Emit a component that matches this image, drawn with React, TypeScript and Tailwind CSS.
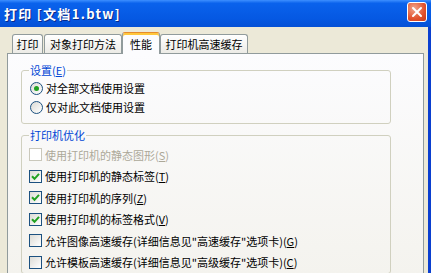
import React from "react";

const cjk = { fontFamily: '"Noto Sans CJK SC", "Noto Sans", sans-serif' };

function Mn({ k }: { k: string }) {
  return (
    <span>
      (<span className="underline underline-offset-[1px]">{k}</span>)
    </span>
  );
}

function Radio({ checked, children }: { checked?: boolean; children: React.ReactNode }) {
  return (
    <div className="flex h-[19px] items-center">
      <span className="flex h-[13px] w-[13px] items-center justify-center rounded-full border border-[#1c5180] bg-[linear-gradient(135deg,#dcdbd5,#ffffff)]">
        {checked && <span className="h-[5px] w-[5px] rounded-full bg-[#21a121]" />}
      </span>
      <span className="ml-[3px] text-[11px] text-black">{children}</span>
    </div>
  );
}

function Check({
  checked,
  disabled,
  children,
}: {
  checked?: boolean;
  disabled?: boolean;
  children: React.ReactNode;
}) {
  return (
    <div className="flex h-[21.5px] shrink-0 items-center">
      <span
        className={
          disabled
            ? "flex h-[13px] w-[13px] items-center justify-center border border-[#cac8bb] bg-white"
            : "flex h-[13px] w-[13px] items-center justify-center border border-[#1c5180] bg-[linear-gradient(135deg,#dcdbd5,#ffffff)]"
        }
      >
        {checked && (
          <svg width="9" height="9" viewBox="0 0 9 9">
            <path d="M1 4.2 L3.5 6.8 L8 1.8" fill="none" stroke="#21a121" strokeWidth="2" />
          </svg>
        )}
      </span>
      <span className={disabled ? "ml-[3px] text-[11px] text-[#aca899]" : "ml-[3px] text-[11px] text-black"}>
        {children}
      </span>
    </div>
  );
}

function Tab({ label, selected, w }: { label: string; selected?: boolean; w: string }) {
  if (selected) {
    return (
      <div
        className={`relative z-10 -mx-[1px] -mb-px flex h-[22px] ${w} items-start justify-center rounded-t-[3px] border border-b-0 border-[#919b9c] border-t-[#e68b2c] bg-[#fcfcfe] pt-[3px] text-[11px] text-black shadow-[inset_0_2px_0_#ffc73c]`}
      >
        {label}
      </div>
    );
  }
  return (
    <div
      className={`flex h-[19px] ${w} items-center justify-center rounded-t-[3px] border border-b-0 border-[#919b9c] bg-[linear-gradient(180deg,#ffffff,#ecebe6)] text-[11px] text-black`}
    >
      {label}
    </div>
  );
}

export default function App() {
  return (
    <div className="flex h-[273px] w-[431px] flex-col overflow-hidden bg-[#ece9d8]" style={cjk}>
      {/* title bar */}
      <div className="flex h-[27px] shrink-0 items-center justify-between bg-[linear-gradient(180deg,#3d8fff_0%,#0a62ec_12%,#0558e2_70%,#0450d6_100%)] pl-[4px] pr-[4px]">
        <span className="text-[13px] font-bold tracking-[1.3px] text-white [text-shadow:1px_1px_0_#0a2a8a]">
          打印 [文档1.btw]
        </span>
        <div className="mb-[3px] flex h-[20px] w-[20px] items-center justify-center rounded-[3px] border border-white bg-[radial-gradient(circle_at_35%_30%,#f0a58c,#e2522d_60%,#c63a1a)]">
          <svg width="12" height="12" viewBox="0 0 12 12">
            <path d="M2 2 L10 10 M10 2 L2 10" stroke="white" strokeWidth="2" strokeLinecap="round" />
          </svg>
        </div>
      </div>

      {/* body */}
      <div className="flex flex-1 flex-col border-r-[3px] border-r-[#0a3fd0] pl-[7px] pr-[4px] pt-[5px]">
        <div className="flex items-end gap-[1px] pl-[5px]">
          <Tab label="打印" w="w-[31px]" />
          <Tab label="对象打印方法" w="w-[78px]" />
          <Tab label="性能" w="w-[38px]" selected />
          <Tab label="打印机高速缓存" w="w-[88px]" />
        </div>

        <div className="flex flex-1 flex-col border border-[#919b9c] bg-[linear-gradient(180deg,#fcfcfe,#f4f3ee)] pl-[13px] pr-[32px] pt-[9px]">
          <fieldset className="h-[61px] rounded-[3px] border border-[#d0d0bf] px-[8px]">
            <legend className="ml-[-1px] px-[1px] text-[11px] leading-[14px] text-[#0046d5]">
              设置<Mn k="E" />
            </legend>
            <div className="mt-[2px] flex flex-col">
              <Radio checked>对全部文档使用设置</Radio>
              <Radio>仅对此文档使用设置</Radio>
            </div>
          </fieldset>

          <fieldset className="mt-[4px] rounded-[3px] border border-[#d0d0bf] px-[7px]">
            <legend className="ml-[0px] px-[1px] text-[11px] leading-[14px] text-[#0046d5]">打印机优化</legend>
            <div className="mt-[2px] flex flex-col">
              <Check disabled>
                使用打印机的静态图形<Mn k="S" />
              </Check>
              <Check checked>
                使用打印机的静态标签<Mn k="T" />
              </Check>
              <Check checked>
                使用打印机的序列<Mn k="Z" />
              </Check>
              <Check checked>
                使用打印机的标签格式<Mn k="V" />
              </Check>
              <Check>
                允许图像高速缓存(详细信息见"高速缓存"选项卡)<Mn k="G" />
              </Check>
              <Check>
                允许模板高速缓存(详细信息见"高级缓存"选项卡)<Mn k="C" />
              </Check>
            </div>
          </fieldset>
        </div>
      </div>
    </div>
  );
}
